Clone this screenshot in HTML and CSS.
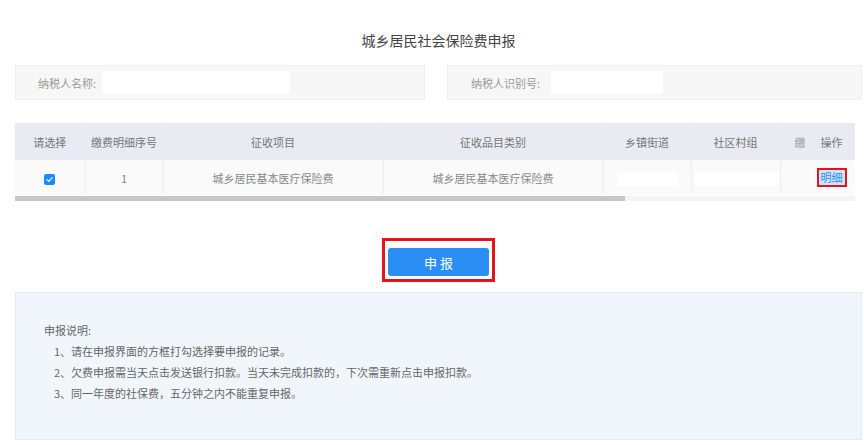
FILE: index.html
```html
<!DOCTYPE html>
<html lang="zh-CN">
  <head>
    <meta charset="UTF-8" />
    <meta name="viewport" content="width=device-width, initial-scale=1.0" />
    <title>城乡居民社会保险费申报</title>
    <link rel="stylesheet" href="styles.css">
  </head>

  <body>
    <div class="page">
      <h1 class="title">城乡居民社会保险费申报</h1>

      <div class="info">
        <div class="info-box">
          <span class="info-label">纳税人名称:</span>
          <span class="info-input info-input--name"></span>
        </div>
        <div class="info-box info-box--right">
          <span class="info-label">纳税人识别号:</span>
          <span class="info-input info-input--id"></span>
        </div>
      </div>

      <div class="grid-wrap">
        <table class="grid">
          <colgroup>
            <col style="width: 70px" />
            <col style="width: 78px" />
            <col style="width: 220px" />
            <col style="width: 220px" />
            <col style="width: 88px" />
            <col style="width: 89px" />
            <col style="width: 28px" />
            <col style="width: 47px" />
          </colgroup>
          <thead>
            <tr>
              <th>请选择</th>
              <th>缴费明细序号</th>
              <th>征收项目</th>
              <th>征收品目类别</th>
              <th>乡镇街道</th>
              <th>社区村组</th>
              <th class="cut">缴</th>
              <th class="fixed">操作</th>
            </tr>
          </thead>
          <tbody>
            <tr>
              <td><span class="check"><svg viewBox="0 0 12 12" width="9" height="9"><path d="M2.5 6.2 L5 8.5 L9.6 3.6" fill="none" stroke="#fff" stroke-width="1.6" stroke-linecap="round" stroke-linejoin="round"/></svg></span></td>
              <td>1</td>
              <td>城乡居民基本医疗保险费</td>
              <td>城乡居民基本医疗保险费</td>
              <td><span class="cell-input cell-input--street"></span></td>
              <td><span class="cell-input cell-input--village"></span></td>
              <td class="cut"></td>
              <td class="fixed"><a class="detail" href="#">明细</a></td>
            </tr>
          </tbody>
        </table>
        <div class="scrollbar"><div class="scrollbar-thumb"></div></div>
      </div>

      <div class="actions">
        <div class="mark">
          <button class="submit">申 报</button>
        </div>
      </div>

      <div class="notes">
        <p class="notes-title">申报说明:</p>
        <p class="notes-item">1、请在申报界面的方框打勾选择要申报的记录。</p>
        <p class="notes-item">2、欠费申报需当天点击发送银行扣款。当天未完成扣款的，下次需重新点击申报扣款。</p>
        <p class="notes-item">3、同一年度的社保费，五分钟之内不能重复申报。</p>
      </div>
    </div>
  </body>
</html>
```

FILE: styles.css
```css
body {
  margin: 0;
  background-color: #fff;
  color: #777;
  font-family: "Noto Sans CJK SC", "Microsoft YaHei", sans-serif;
  font-size: 11px;
}

.page {
  width: 847px;
  padding: 30px 2px 0 15px;
}

.title {
  margin: 0 0 15px;
  height: 20px;
  line-height: 20px;
  font-size: 14px;
  font-weight: normal;
  color: #444;
  text-align: center;
}

.info {
  display: grid;
  grid-template-columns: 410px 415px;
  column-gap: 22px;
}

.info-box {
  display: flex;
  align-items: center;
  height: 33px;
  padding-left: 22px;
  background-color: #f7f7f7;
  border: 1px solid #efefef;
}

.info-box--right {
  padding-left: 23px;
}

.info-label {
  color: #999;
}

.info-input {
  height: 23px;
  background-color: #fff;
}

.info-input--name {
  width: 188px;
  margin-left: 6px;
}

.info-input--id {
  width: 112px;
  margin-left: 11px;
}

.grid-wrap {
  width: 840px;
  margin-top: 23px;
}

.grid {
  width: 840px;
  table-layout: fixed;
  border-collapse: collapse;
}

.grid th,
.grid td {
  padding: 0;
  text-align: center;
  border-right: 1px solid #eceef2;
  white-space: nowrap;
  overflow: hidden;
}

.grid th {
  height: 37px;
  background-color: #e8ecf2;
  font-weight: normal;
  color: #777;
}

.grid td {
  height: 35px;
  background-color: #fafafa;
  color: #888;
}

.grid .cut {
  text-align: left;
  padding-left: 14px;
  border-right: none;
  color: #999;
}

.grid .fixed {
  border-right: none;
  box-shadow: -3px 0 4px rgba(0, 0, 0, 0.08);
  position: relative;
}

.check {
  display: inline-flex;
  align-items: center;
  justify-content: center;
  width: 11px;
  height: 11px;
  border-radius: 2px;
  background-color: #1d8cf8;
  vertical-align: middle;
}

.cell-input {
  display: inline-block;
  height: 14px;
  background-color: #fff;
  vertical-align: middle;
}

.cell-input--street {
  width: 61px;
}

.cell-input--village {
  width: 84px;
  margin-left: 2px;
}

.detail {
  display: inline-block;
  padding: 1px 2px;
  border: 2px solid #e2141c;
  color: #2a8ef4;
  background-color: #cfe4fb;
  text-decoration: none;
  line-height: 13px;
}

.scrollbar {
  height: 5px;
  margin-top: 1px;
  background-color: #f4f4f4;
}

.scrollbar-thumb {
  width: 610px;
  height: 5px;
  background-color: #c6c6c6;
}

.actions {
  display: flex;
  justify-content: center;
  margin-top: 37px;
}

.mark {
  padding: 7px 3px 3px;
  border: 3px solid #e2141c;
}

.submit {
  display: block;
  width: 101px;
  height: 28px;
  border: none;
  border-radius: 3px;
  background-color: #2a8ef4;
  color: #fff;
  font-family: inherit;
  font-size: 13px;
}

.notes {
  height: 148px;
  box-sizing: border-box;
  margin-top: 10px;
  padding: 27px 28px 0;
  background-color: #f1f6fd;
  border: 1px solid #e6ebf2;
}

.notes p {
  margin: 0;
  height: 21px;
  line-height: 21px;
  color: #666;
}

.notes-item {
  padding-left: 10px;
}
```
